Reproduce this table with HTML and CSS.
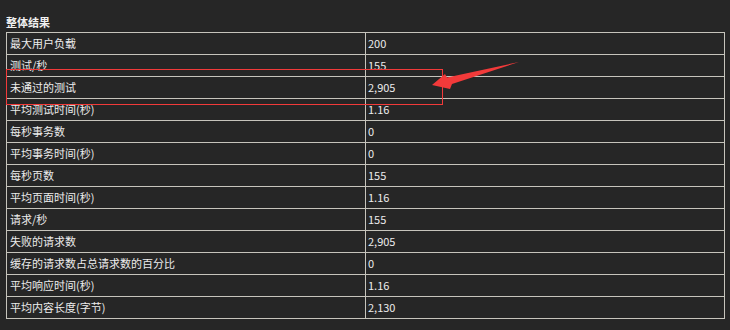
FILE: index.html
```html
<!DOCTYPE html>
<html lang="zh-CN">
<head>
<meta charset="utf-8">
<link rel="stylesheet" href="styles.css">
</head>
<body>
<div class="page">
  <div class="title">整体结果</div>
  <table class="results">
    <tr><td class="k">最大用户负载</td><td class="v">200</td></tr>
    <tr><td class="k">测试/秒</td><td class="v">155</td></tr>
    <tr><td class="k">未通过的测试</td><td class="v">2,905</td></tr>
    <tr><td class="k">平均测试时间(秒)</td><td class="v">1.16</td></tr>
    <tr><td class="k">每秒事务数</td><td class="v">0</td></tr>
    <tr><td class="k">平均事务时间(秒)</td><td class="v">0</td></tr>
    <tr><td class="k">每秒页数</td><td class="v">155</td></tr>
    <tr><td class="k">平均页面时间(秒)</td><td class="v">1.16</td></tr>
    <tr><td class="k">请求/秒</td><td class="v">155</td></tr>
    <tr><td class="k">失败的请求数</td><td class="v">2,905</td></tr>
    <tr><td class="k">缓存的请求数占总请求数的百分比</td><td class="v">0</td></tr>
    <tr><td class="k">平均响应时间(秒)</td><td class="v">1.16</td></tr>
    <tr><td class="k">平均内容长度(字节)</td><td class="v">2,130</td></tr>
  </table>
  <svg class="annot" width="730" height="330" viewBox="0 0 730 330">
    <rect x="6.5" y="69.5" width="436" height="35" fill="none" stroke="#f23a3a" stroke-width="1"/>
    <polygon points="432,85 445,74 447,77.5 519,62 452,84 450,89" fill="#f23a3a"/>
  </svg>
</div>
</body>
</html>
```
FILE: styles.css
```css
html, body {
  margin: 0;
  padding: 0;
  background: #262626;
}
.page {
  position: relative;
  width: 730px;
  height: 330px;
  padding: 13px 6px 0 6px;
  box-sizing: border-box;
  font-family: "Noto Sans CJK SC", "Noto Sans", sans-serif;
  font-size: 11px;
  color: #ececec;
}
.title {
  font-weight: bold;
  line-height: 19px;
  height: 19px;
  color: #f0f0f0;
}
.results {
  border-collapse: collapse;
  width: 719px;
  table-layout: fixed;
}
.results td {
  border: 1px solid #c6c4bc;
  height: 21px;
  padding: 0 3px;
  line-height: 21px;
  box-sizing: border-box;
  vertical-align: middle;
  white-space: nowrap;
}
.results td.k {
  width: 359px;
}
.results td.v {
  padding-left: 2px;
}
.annot {
  position: absolute;
  left: 0;
  top: 0;
  pointer-events: none;
}
```
